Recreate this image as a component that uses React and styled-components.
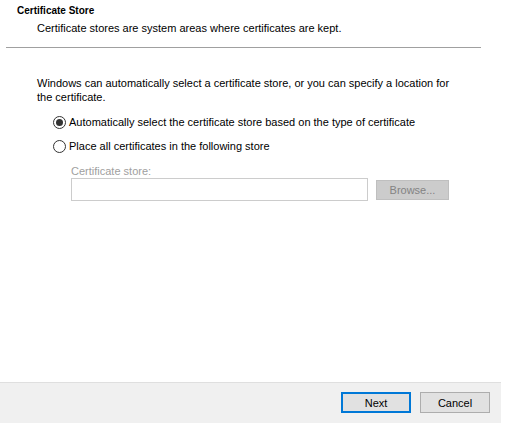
import React, { useState } from 'react';
import styled, { createGlobalStyle } from 'styled-components';

const GlobalStyle = createGlobalStyle`
  html, body {
    margin: 0;
    padding: 0;
    background: #fff;
  }
  body {
    font-family: "Liberation Sans", Arial, sans-serif;
    font-size: 11px;
    color: #000;
  }
`;

const Page = styled.div`
  width: 507px;
  height: 428px;
  display: flex;
  flex-direction: column;
  background: #fff;
`;

const Header = styled.header`
  padding: 3px 0 0 17px;
  height: 47px;
  box-sizing: border-box;
`;

const Title = styled.div`
  font-weight: bold;
  font-size: 10px;
  line-height: 15px;
`;

const Subtitle = styled.div`
  padding: 3px 0 0 20px;
  line-height: 15px;
`;

const Separator = styled.hr`
  margin: 0 0 0 6px;
  width: 475px;
  border: none;
  border-top: 1px solid #a0a0a0;
  height: 0;
`;

const Content = styled.main`
  flex: 1;
  padding: 28px 0 0 37px;
`;

const Intro = styled.p`
  margin: 0;
  width: 418px;
  line-height: 14px;
`;

const Options = styled.div`
  display: flex;
  flex-direction: column;
  gap: 11px;
  margin: 12px 0 0 16px;
`;

const OptionRow = styled.label`
  display: flex;
  align-items: center;
  gap: 3px;
  line-height: 13px;
`;

const Radio = styled.input.attrs({ type: 'radio' })`
  appearance: none;
  margin: 0;
  width: 13px;
  height: 13px;
  border: 1px solid #333;
  border-radius: 50%;
  box-sizing: border-box;
  display: grid;
  place-content: center;
  background: #fff;

  &::before {
    content: '';
    width: 7px;
    height: 7px;
    border-radius: 50%;
    background: #333;
    transform: scale(0);
  }
  &:checked::before {
    transform: scale(1);
  }
`;

const StoreBlock = styled.div`
  margin: 12px 0 0 34px;
`;

const FieldLabel = styled.div`
  color: #a0a0a0;
  line-height: 13px;
`;

const FieldRow = styled.div`
  display: flex;
  align-items: center;
  gap: 8px;
`;

const StoreInput = styled.input`
  width: 297px;
  height: 23px;
  box-sizing: border-box;
  border: 1px solid #cccccc;
  background: #fff;
  margin: 0;
  padding: 0 4px;
  font: inherit;
`;

const Button = styled.button`
  width: ${p => p.$w || 70}px;
  height: ${p => p.$h || 21}px;
  box-sizing: border-box;
  margin: 0;
  padding: 0;
  font-family: inherit;
  font-size: 11px;
  color: ${p => (p.disabled ? '#838383' : '#000')};
  background: ${p => (p.disabled ? '#cccccc' : '#e1e1e1')};
  border: ${p => (p.$primary ? '2px solid #0078d7' : p.disabled ? '1px solid #bfbfbf' : '1px solid #adadad')};
  cursor: default;
`;

const Footer = styled.footer`
  width: 501px;
  height: 41px;
  box-sizing: border-box;
  margin-bottom: 5px;
  background: #f0f0f0;
  border-top: 1px solid #dfdfdf;
  display: flex;
  justify-content: flex-end;
  align-items: flex-start;
  gap: 9px;
  padding: 9px 11px 0 0;
`;

export default function App() {
  const [mode, setMode] = useState('auto');

  return (
    <>
      <GlobalStyle />
      <Page>
        <Header>
          <Title>Certificate Store</Title>
          <Subtitle>Certificate stores are system areas where certificates are kept.</Subtitle>
        </Header>
        <Separator />
        <Content>
          <Intro>
            Windows can automatically select a certificate store, or you can specify a location for
            the certificate.
          </Intro>
          <Options>
            <OptionRow>
              <Radio name="store" checked={mode === 'auto'} onChange={() => setMode('auto')} />
              Automatically select the certificate store based on the type of certificate
            </OptionRow>
            <OptionRow>
              <Radio name="store" checked={mode === 'manual'} onChange={() => setMode('manual')} />
              Place all certificates in the following store
            </OptionRow>
          </Options>
          <StoreBlock>
            <FieldLabel>Certificate store:</FieldLabel>
            <FieldRow>
              <StoreInput disabled={mode !== 'manual'} />
              <Button $w={73} $h={20} disabled={mode !== 'manual'}>Browse...</Button>
            </FieldRow>
          </StoreBlock>
        </Content>
        <Footer>
          <Button $primary>Next</Button>
          <Button>Cancel</Button>
        </Footer>
      </Page>
    </>
  );
}
